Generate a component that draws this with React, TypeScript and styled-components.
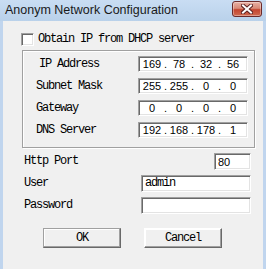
import React from 'react';
import styled, { createGlobalStyle } from 'styled-components';

const GlobalStyle = createGlobalStyle`
  html, body {
    margin: 0;
    padding: 0;
    background: #f0f0f0;
  }
`;

const StyledWindow = styled.div`
  width: 266px;
  height: 269px;
  display: flex;
  flex-direction: column;
  background: #c0d5ee;
  overflow: hidden;
`;

const StyledTitleBar = styled.div`
  height: 21px;
  flex: none;
  display: flex;
  flex-direction: row;
  align-items: flex-start;
  justify-content: space-between;
  padding: 0 4px 0 5px;
  box-sizing: border-box;
  background: linear-gradient(#c9ddf3, #b9d1ea);
`;

const StyledTitle = styled.span`
  font-family: 'Liberation Sans', Arial, sans-serif;
  font-size: 12.5px;
  line-height: 20px;
  color: #1a1a1a;
  white-space: nowrap;
`;

const StyledCloseButton = styled.div`
  width: 30px;
  height: 16px;
  margin-top: 1px;
  box-sizing: border-box;
  border: 1px solid #6b2a2a;
  border-radius: 3px;
  background: linear-gradient(#e8b0a4 0%, #d88a78 45%, #c4452f 55%, #cf6a50 100%);
  box-shadow: inset 0 0 0 1px rgba(255, 255, 255, 0.35);
  display: flex;
  align-items: center;
  justify-content: center;
`;

const StyledClient = styled.div`
  flex: 1;
  margin: 0 3px;
  background: #f0f0f0;
  display: flex;
  flex-direction: column;
  padding: 12px 0 0 18px;
  box-sizing: border-box;
  color: #000;
  font-family: 'Liberation Mono', 'DejaVu Sans Mono', monospace;
  font-size: 12px;
  letter-spacing: -1.2px;
`;

const StyledCheckRow = styled.label`
  display: flex;
  flex-direction: row;
  align-items: center;
  gap: 4px;
  height: 13px;
`;

const StyledCheckbox = styled.span`
  width: 13px;
  height: 13px;
  box-sizing: border-box;
  border: 1px solid;
  border-color: #a0a0a0 #fff #fff #a0a0a0;
  box-shadow: inset 1px 1px 0 #696969, inset -1px -1px 0 #e3e3e3;
  background: #fff;
`;

const StyledText = styled.span<{ $indent?: number }>`
  white-space: pre;
  line-height: 13px;
  padding-left: ${(p) => p.$indent || 0}px;
`;

const StyledGroup = styled.div`
  margin: 4px 0 0 1px;
  width: 233px;
  height: 98px;
  box-sizing: border-box;
  border: 1px solid #a0a0a0;
  box-shadow: 1px 1px 0 #fff, inset 1px 1px 0 #fff;
  display: grid;
  grid-template-columns: 102px 110px;
  grid-auto-rows: 16px;
  row-gap: 6px;
  align-content: start;
  align-items: center;
  padding: 5px 0 0 13px;
`;

const StyledField = styled.div<{ $width?: number; $alignEnd?: boolean }>`
  width: ${(p) => p.$width || 110}px;
  height: 100%;
  justify-self: ${(p) => (p.$alignEnd ? 'end' : 'start')};
  box-sizing: border-box;
  border: 1px solid;
  border-color: #a0a0a0 #fff #fff #a0a0a0;
  box-shadow: inset 1px 1px 0 #696969, inset -1px -1px 0 #e3e3e3;
  background: #fff;
  display: flex;
  flex-direction: row;
  align-items: center;
  padding-left: 3px;
  overflow: hidden;
`;

const StyledIpField = styled(StyledField)`
  font-family: 'Liberation Sans', Arial, sans-serif;
  font-size: 11px;
  letter-spacing: 0;
`;

const StyledOctet = styled.span`
  width: 20px;
  text-align: center;
`;

const StyledDot = styled.span`
  width: 7px;
  text-align: center;
`;

const StyledPortValue = styled.span`
  font-family: 'Liberation Sans', Arial, sans-serif;
  font-size: 11px;
  letter-spacing: 0;
`;

const StyledForm = styled.div`
  margin: 5px 0 0 3px;
  display: grid;
  grid-template-columns: 117px 110px;
  grid-auto-rows: 17px;
  row-gap: 5px;
  align-items: center;
`;

const StyledButtonRow = styled.div`
  display: flex;
  flex-direction: row;
  gap: 23px;
  margin: 14px 0 0 22px;
`;

const StyledButton = styled.div<{ $default?: boolean }>`
  width: 78px;
  height: 20px;
  box-sizing: border-box;
  border: 1px solid;
  border-color: ${(p) => (p.$default ? '#a0a0a0' : '#fff')} #696969 #696969
    ${(p) => (p.$default ? '#a0a0a0' : '#fff')};
  box-shadow: inset -1px -1px 0 #a0a0a0, inset 1px 1px 0 #fff;
  background: #f0f0f0;
  display: flex;
  align-items: center;
  justify-content: center;
`;

const IpAddress = (props: { octets: string[] }) => {
  const { octets } = props;
  return (
    <StyledIpField>
      {octets.map((o, i) => (
        <React.Fragment key={i}>
          {i > 0 && <StyledDot>.</StyledDot>}
          <StyledOctet>{o}</StyledOctet>
        </React.Fragment>
      ))}
    </StyledIpField>
  );
};

const CloseGlyph = () => (
  <svg width="12" height="10" viewBox="0 0 12 10">
    <path d="M2 1.5 L10 8.5 M10 1.5 L2 8.5" stroke="#5a2020" strokeWidth="4" strokeLinecap="square" />
    <path d="M2 1.5 L10 8.5 M10 1.5 L2 8.5" stroke="#fff" strokeWidth="2" strokeLinecap="square" />
  </svg>
);

const ipRows = [
  { label: 'IP Address', indent: 3, octets: ['169', '78', '32', '56'] },
  { label: 'Subnet Mask', indent: 0, octets: ['255', '255', '0', '0'] },
  { label: 'Gateway', indent: 0, octets: ['0', '0', '0', '0'] },
  { label: 'DNS Server', indent: 0, octets: ['192', '168', '178', '1'] },
];

export default function App() {
  return (
    <>
      <GlobalStyle />
      <StyledWindow>
        <StyledTitleBar>
          <StyledTitle>Anonym Network Configuration</StyledTitle>
          <StyledCloseButton>
            <CloseGlyph />
          </StyledCloseButton>
        </StyledTitleBar>
        <StyledClient>
          <StyledCheckRow>
            <StyledCheckbox />
            <StyledText>Obtain IP from DHCP server</StyledText>
          </StyledCheckRow>
          <StyledGroup>
            {ipRows.map((row) => (
              <React.Fragment key={row.label}>
                <StyledText $indent={row.indent}>{row.label}</StyledText>
                <IpAddress octets={row.octets} />
              </React.Fragment>
            ))}
          </StyledGroup>
          <StyledForm>
            <StyledText>Http Port</StyledText>
            <StyledField $width={37} $alignEnd>
              <StyledPortValue>80</StyledPortValue>
            </StyledField>
            <StyledText>User</StyledText>
            <StyledField>
              <StyledText>admin</StyledText>
            </StyledField>
            <StyledText>Password</StyledText>
            <StyledField />
          </StyledForm>
          <StyledButtonRow>
            <StyledButton $default>OK</StyledButton>
            <StyledButton>Cancel</StyledButton>
          </StyledButtonRow>
        </StyledClient>
      </StyledWindow>
    </>
  );
}
